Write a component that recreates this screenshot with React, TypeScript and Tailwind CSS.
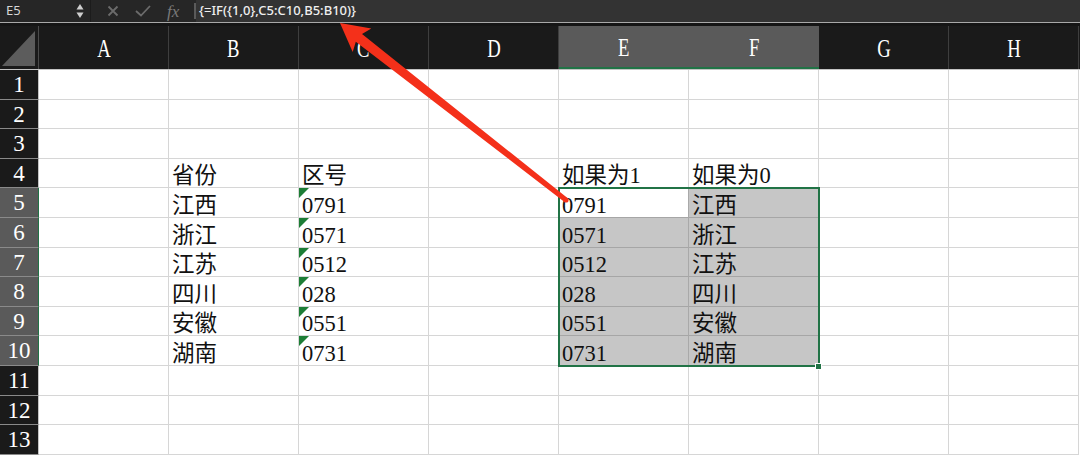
import React from "react";

const COLS = ["A", "B", "C", "D", "E", "F", "G", "H"];
const SERIF = "font-['Liberation_Serif','Noto_Sans_CJK_SC',serif]";

const provinces = ["江西", "浙江", "江苏", "四川", "安徽", "湖南"];
const codes = ["0791", "0571", "0512", "028", "0551", "0731"];

type Cell = { text?: string; flag?: boolean; sel?: boolean; active?: boolean };

function rowCells(r: number): Cell[] {
  const cells: Cell[] = COLS.map(() => ({}));
  if (r === 4) {
    cells[1].text = "省份";
    cells[2].text = "区号";
    cells[4].text = "如果为1";
    cells[5].text = "如果为0";
  }
  if (r >= 5 && r <= 10) {
    const i = r - 5;
    cells[1].text = provinces[i];
    cells[2] = { text: codes[i], flag: true };
    cells[4] = { text: codes[i], sel: true, active: r === 5 };
    cells[5] = { text: provinces[i], sel: true };
  }
  return cells;
}

function FormulaBar() {
  return (
    <div className="flex h-[22px] bg-[#262626] font-['Noto_Sans','Liberation_Sans',sans-serif]">
      <div className="flex w-[90px] items-center justify-between pl-[6px] pr-[6px] text-[13px] text-[#d6d6d6]">
        <span>E5</span>
        <svg width="8" height="16" viewBox="0 0 8 16">
          <path d="M4 1 L7.5 6.5 L0.5 6.5 Z" fill="#cfcfcf" />
          <path d="M4 15 L7.5 9.5 L0.5 9.5 Z" fill="#cfcfcf" />
        </svg>
      </div>
      <div className="w-px bg-[#1c1c1c]" />
      <div className="flex w-[103px] items-center gap-[16px] pl-[16px]">
        <svg width="12" height="12" viewBox="0 0 12 12">
          <path d="M1.5 1.5 L10.5 10.5 M10.5 1.5 L1.5 10.5" stroke="#6b6b6b" strokeWidth="1.8" />
        </svg>
        <svg width="16" height="12" viewBox="0 0 16 12">
          <path d="M1 6 L6 10.5 L15 1" stroke="#6b6b6b" strokeWidth="1.8" fill="none" />
        </svg>
        <span className="font-['Liberation_Serif',serif] text-[17px] italic leading-none text-[#7a7a7a]">fx</span>
      </div>
      <div className="my-[3px] w-[2px] bg-[#5a5a5a]" />
      <div className="flex flex-1 items-center bg-[#333333] pl-[3px] text-[13px] font-medium text-[#efefef]">
        {"{=IF({1,0},C5:C10,B5:B10)}"}
      </div>
    </div>
  );
}

function HeaderRow() {
  return (
    <div className={`flex h-[43px] bg-[#1a1a1a] ${SERIF}`}>
      <div className="relative w-[39px] border-r border-[#4a4a4a]">
        <svg className="absolute inset-0" width="38" height="43" viewBox="0 0 38 43">
          <path d="M35 5 L35 40 L2 40 Z" fill="#5c5c5c" />
        </svg>
      </div>
      {COLS.map((c) => {
        const sel = c === "E" || c === "F";
        return (
          <div
            key={c}
            className={`flex w-[130px] items-center justify-center pt-[2px] text-[22px] text-white ${
              sel ? "border-b-2 border-[#217346] bg-[#5a5a5a]" : "border-r border-[#3e3e3e]"
            }`}
          >
            <span className="inline-block scale-x-[0.85] scale-y-[1.1]">{c}</span>
          </div>
        );
      })}
    </div>
  );
}

export default function App() {
  const rows = Array.from({ length: 13 }, (_, i) => i + 1);
  return (
    <div className="relative h-[456px] w-[1080px] overflow-hidden bg-white">
      <FormulaBar />
      <div className="h-px bg-[#a9a9a9]" />
      <div className="h-[3px] bg-[#151515]" />
      <HeaderRow />
      <div className="h-px bg-[#c4c4c4]" />
      <div className="relative">
        {rows.map((r) => {
          const selRow = r >= 5 && r <= 10;
          return (
            <div key={r} className="flex h-[29.6px]">
              <div
                className={`flex w-[39px] items-center justify-center border-b border-[#8a8a8a] pt-[2px] text-[23px] text-white ${SERIF} ${
                  selRow ? "border-r border-r-[#217346] bg-[#5a5a5a]" : "border-r border-r-[#c4c4c4] bg-[#1a1a1a]"
                }`}
              >
                {r}
              </div>
              {rowCells(r).map((cell, ci) => (
                <div
                  key={ci}
                  className={`relative flex w-[130px] items-end overflow-visible whitespace-nowrap border-r border-b pl-[3px] text-[22.5px] leading-[23px] text-[#111] ${SERIF} ${
                    cell.sel && !cell.active ? "bg-[#c6c6c6]" : "bg-white"
                  } ${cell.sel && r < 10 ? "border-b-[#a6a6a6]" : "border-b-[#d6d6d6]"} ${
                    cell.sel && ci === 4 ? "border-r-[#a9a9a9]" : "border-r-[#d6d6d6]"
                  }`}
                >
                  {cell.flag && (
                    <svg className="absolute left-0 top-0" width="10" height="10" viewBox="0 0 10 10">
                      <path d="M0 0 L10 0 L0 10 Z" fill="#1d7d35" />
                    </svg>
                  )}
                  {cell.text}
                </div>
              ))}
            </div>
          );
        })}
        {/* selection outline E5:F10 */}
        <div className="pointer-events-none absolute left-[558px] top-[117.4px] h-[179.6px] w-[262px] border-2 border-[#217346]" />
        <div className="absolute left-[815px] top-[293px] h-[7px] w-[7px] border border-white bg-[#217346]" />
      </div>
      {/* annotation arrow */}
      <svg className="pointer-events-none absolute left-0 top-0" width="1080" height="456" viewBox="0 0 1080 456">
        <polygon
          points="340,23 371.3,28.5 362,33.9 567.5,198.1 564.5,201.9 355.8,41.7 352.7,52.1"
          fill="#f4301a"
        />
        <circle cx="566" cy="200" r="2.6" fill="#f4301a" />
      </svg>
    </div>
  );
}
